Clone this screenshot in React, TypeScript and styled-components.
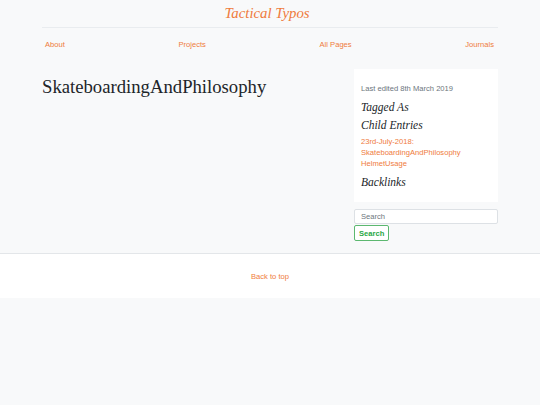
import React from 'react';
import styled, { createGlobalStyle } from 'styled-components';

const GlobalStyle = createGlobalStyle`
  html, body {
    margin: 0;
    padding: 0;
    background: #f8f9fa;
    font-family: "Liberation Sans", Arial, sans-serif;
    color: #212529;
  }
`;

const orange = '#ef7b3d';

const Container = styled.div`
  width: 456px;
  margin: 0 auto;
`;

const Brand = styled.h1`
  margin: 0;
  padding: 5px 6px 0 0;
  height: 22px;
  text-align: center;
  font-family: "Liberation Serif", Georgia, serif;
  font-style: italic;
  font-weight: normal;
  font-size: 14.8px;
  line-height: 16px;
  color: ${orange};
`;

const Rule = styled.hr`
  margin: 0;
  border: 0;
  border-top: 1px solid #e9ecef;
`;

const Nav = styled.nav`
  display: flex;
  justify-content: space-between;
  padding: 12px 4px 0 3px;
  height: 30px;
  box-sizing: border-box;
`;

const NavLink = styled.a`
  color: ${orange};
  font-size: 7.6px;
  line-height: 10px;
  text-decoration: none;
`;

const Body = styled.div`
  display: grid;
  grid-template-columns: 1fr 144px;
  column-gap: 14px;
  padding-top: 11px;
  padding-bottom: 12px;
`;

const PageTitle = styled.h2`
  margin: 6px 0 0;
  font-family: "Liberation Serif", Georgia, serif;
  font-weight: normal;
  font-size: 18.7px;
  line-height: 24px;
  color: #212529;
`;

const Sidebar = styled.aside`
  display: flex;
  flex-direction: column;
`;

const Card = styled.div`
  background: #fff;
  padding: 14px 7px 9px;
  margin-bottom: 7px;
`;

const Meta = styled.p`
  margin: 0 0 5px;
  font-size: 7.6px;
  line-height: 12px;
  color: #6c757d;
`;

const SectionHead = styled.h3`
  margin: 0 0 3px;
  font-family: "Liberation Serif", Georgia, serif;
  font-style: italic;
  font-weight: normal;
  font-size: 11.5px;
  line-height: 15px;
  color: #212529;
`;

const LinkList = styled.div`
  display: flex;
  flex-direction: column;
  margin: 0 0 6px;
`;

const EntryLink = styled.a`
  color: ${orange};
  font-size: 7.6px;
  line-height: 11px;
  text-decoration: none;
`;

const SearchInput = styled.input`
  box-sizing: border-box;
  width: 100%;
  height: 15px;
  margin: 0;
  padding: 0 6px;
  border: 1px solid #dde1e5;
  border-radius: 2px;
  background: #fff;
  font-family: "Liberation Sans", Arial, sans-serif;
  font-size: 7.6px;
  color: #495057;
  outline: none;

  &::placeholder {
    color: #6c757d;
  }
`;

const SearchButton = styled.button`
  align-self: flex-start;
  box-sizing: border-box;
  height: 16px;
  margin-top: 1px;
  padding: 0 4px;
  border: 1px solid #5cb870;
  border-radius: 2px;
  background: #fff;
  color: #28a745;
  font-family: "Liberation Sans", Arial, sans-serif;
  font-weight: bold;
  font-size: 7.6px;
`;

const Footer = styled.footer`
  background: #fff;
  border-top: 1px solid #e3e6e9;
  height: 44px;
  display: flex;
  align-items: center;
  justify-content: center;
`;

const FooterLink = styled.a`
  color: ${orange};
  font-size: 7.6px;
  text-decoration: none;
`;

export default function App() {
  return (
    <>
      <GlobalStyle />
      <Container>
        <Brand>Tactical Typos</Brand>
        <Rule />
        <Nav>
          <NavLink href="#">About</NavLink>
          <NavLink href="#">Projects</NavLink>
          <NavLink href="#">All Pages</NavLink>
          <NavLink href="#">Journals</NavLink>
        </Nav>
        <Body>
          <main>
            <PageTitle>SkateboardingAndPhilosophy</PageTitle>
          </main>
          <Sidebar>
            <Card>
              <Meta>Last edited 8th March 2019</Meta>
              <SectionHead>Tagged As</SectionHead>
              <SectionHead>Child Entries</SectionHead>
              <LinkList>
                <EntryLink href="#">23rd-July-2018:</EntryLink>
                <EntryLink href="#">SkateboardingAndPhilosophy</EntryLink>
                <EntryLink href="#">HelmetUsage</EntryLink>
              </LinkList>
              <SectionHead>Backlinks</SectionHead>
            </Card>
            <SearchInput placeholder="Search" />
            <SearchButton>Search</SearchButton>
          </Sidebar>
        </Body>
      </Container>
      <Footer>
        <FooterLink href="#">Back to top</FooterLink>
      </Footer>
    </>
  );
}
